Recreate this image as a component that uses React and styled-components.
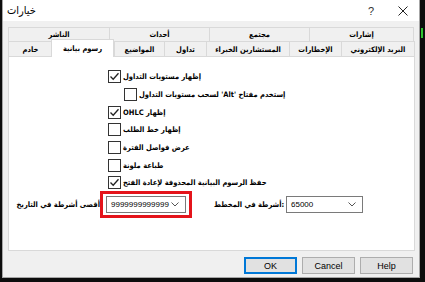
import styled, { createGlobalStyle } from "styled-components";

const GlobalStyle = createGlobalStyle`
  html, body {
    margin: 0;
    padding: 0;
    background: #0d0d0d;
  }
  body {
    font-family: "Liberation Sans", "DejaVu Sans", sans-serif;
    color: #000;
  }
`;

const arabic = `"DejaVu Sans Condensed", "DejaVu Sans", sans-serif`;

const Page = styled.div`
  display: flex;
  width: 425px;
  height: 282px;
  padding-left: 2px;
  box-sizing: border-box;
  overflow: hidden;
`;

const Window = styled.div`
  width: 418px;
  height: 278px;
  box-sizing: border-box;
  background: #f0f0f0;
  border: 1px solid #a6a6a6;
  border-top: none;
  display: flex;
  flex-direction: column;
`;

const Edge = styled.div`
  flex: 1;
  display: flex;
  flex-direction: column;
  padding-top: 28px;
`;

const Marker = styled.div`
  width: 2px;
  height: 10px;
  margin-left: 1px;
  background: #2fc32f;
`;

const TitleBar = styled.div`
  height: 21px;
  background: #fff;
  display: flex;
  align-items: center;
  padding-left: 4px;
`;

const Title = styled.div`
  flex: 1;
  font-family: ${arabic};
  font-size: 11px;
`;

const Ctrl = styled.div`
  width: 32px;
  height: 21px;
  display: flex;
  align-items: center;
  justify-content: center;
  font-size: 11px;
  color: #333;
`;

const Body = styled.div`
  padding: 6px 3px 0 5px;
  display: flex;
  flex-direction: column;
`;

const TabRow = styled.div`
  display: flex;
  height: ${(p) => p.$h}px;
`;

const Tab = styled.div`
  width: ${(p) => p.$w}px;
  box-sizing: border-box;
  border: 1px solid #d9d9d9;
  border-bottom: none;
  margin-right: -1px;
  background: #f0f0f0;
  display: flex;
  align-items: center;
  justify-content: center;
  font-family: ${arabic};
  font-size: 7.5px;
  font-weight: bold;
  white-space: nowrap;
  direction: rtl;
`;

const ActiveTab = styled(Tab)`
  position: relative;
  z-index: 1;
  background: #fff;
  height: 18px;
  margin: -2px 0 -1px -1px;
  width: ${(p) => p.$w + 2}px;
`;

const Panel = styled.div`
  height: 195px;
  width: 407px;
  box-sizing: border-box;
  background: #fff;
  border: 1px solid #d9d9d9;
  padding: 11px 0 0 4px;
  display: flex;
  flex-direction: column;
`;

const Checks = styled.div`
  padding-left: 95px;
  display: flex;
  flex-direction: column;
`;

const CheckRow = styled.div`
  height: 17.7px;
  display: flex;
  align-items: center;
  gap: 2px;
  padding-left: ${(p) => (p.$indent ? 16 : 0)}px;
`;

const Box = styled.span`
  width: 13px;
  height: 13px;
  box-sizing: border-box;
  border: 1px solid #333;
  background: #fff;
  display: flex;
  align-items: center;
  justify-content: center;
  flex-shrink: 0;
`;

const Label = styled.span`
  font-family: ${arabic};
  font-size: 7.5px;
  font-weight: bold;
  white-space: nowrap;
  direction: ltr;
  unicode-bidi: plaintext;
`;

const ComboRow = styled.div`
  display: flex;
  align-items: center;
  margin-top: -1px;
`;

const FieldLabel = styled(Label)`
  width: ${(p) => p.$w}px;
  text-align: right;
  unicode-bidi: normal;
  margin-right: ${(p) => p.$gap}px;
`;

const Highlight = styled.div`
  border: 3px solid #e4141b;
  padding: 2px 3px;
  margin-right: 22px;
  display: flex;
`;

const Combo = styled.div`
  width: ${(p) => p.$w}px;
  height: 17px;
  box-sizing: border-box;
  border: 1px solid #7a7a7a;
  background: #fff;
  display: flex;
  align-items: center;
  justify-content: space-between;
  padding: 0 6px 0 4px;
  font-size: 8px;
`;

const Footer = styled.div`
  display: flex;
  justify-content: flex-end;
  gap: 5px;
  padding: 6px 3px 0 0;
`;

const Button = styled.div`
  width: 53px;
  height: 17px;
  box-sizing: border-box;
  background: #e1e1e1;
  border: ${(p) => (p.$primary ? "2px solid #0078d7" : "1px solid #adadad")};
  display: flex;
  align-items: center;
  justify-content: center;
  font-size: 9px;
`;

const Chevron = () => (
  <svg width="8" height="5" viewBox="0 0 8 5">
    <polyline points="0.5,0.5 4,4 7.5,0.5" fill="none" stroke="#555" strokeWidth="1" />
  </svg>
);

const Check = () => (
  <svg width="11" height="11" viewBox="0 0 11 11">
    <polyline points="1.5,5.5 4.2,8.3 9.5,2.2" fill="none" stroke="#222" strokeWidth="1.3" />
  </svg>
);

const topTabs = [
  { w: 102, t: "الناشر" },
  { w: 101, t: "أحداث" },
  { w: 101, t: "مجتمع" },
  { w: 105, t: "إشارات" },
];

const bottomTabs = [
  { w: 45, t: "خادم" },
  { w: 61, t: "رسوم بيانية", active: true },
  { w: 51, t: "المواضيع" },
  { w: 43, t: "تداول" },
  { w: 84, t: "المستشارين الخبراء" },
  { w: 53, t: "الإخطارات" },
  { w: 74, t: "البريد الإلكتروني" },
];

const options = [
  { t: "إظهار مستويات التداول", on: true },
  { t: "إستخدم مفتاح 'Alt' لسحب مستويات التداول", indent: true },
  { t: "إظهار OHLC", on: true },
  { t: "إظهار خط الطلب" },
  { t: "عرض فواصل الفترة" },
  { t: "طباعة ملونة" },
  { t: "حفظ الرسوم البيانية المحذوفة لإعادة الفتح", on: true },
];

export default function App() {
  return (
    <Page>
      <GlobalStyle />
      <Window>
        <TitleBar>
          <Title>خيارات</Title>
          <Ctrl>?</Ctrl>
          <Ctrl>
            <svg width="10" height="10" viewBox="0 0 10 10">
              <path d="M0.5 0.5 L9.5 9.5 M9.5 0.5 L0.5 9.5" stroke="#222" strokeWidth="1" />
            </svg>
          </Ctrl>
        </TitleBar>
        <Body>
          <TabRow $h={14}>
            {topTabs.map((tab) => (
              <Tab key={tab.t} $w={tab.w}>{tab.t}</Tab>
            ))}
          </TabRow>
          <TabRow $h={15}>
            {bottomTabs.map((tab) =>
              tab.active ? (
                <ActiveTab key={tab.t} $w={tab.w}>{tab.t}</ActiveTab>
              ) : (
                <Tab key={tab.t} $w={tab.w}>{tab.t}</Tab>
              )
            )}
          </TabRow>
          <Panel>
            <Checks>
              {options.map((o) => (
                <CheckRow key={o.t} $indent={o.indent}>
                  <Box>{o.on && <Check />}</Box>
                  <Label>{o.t}</Label>
                </CheckRow>
              ))}
            </Checks>
            <ComboRow>
              <FieldLabel $w={87} $gap={0}>أقصى أشرطة في التاريخ</FieldLabel>
              <Highlight>
                <Combo $w={80}>
                  <span>9999999999999</span>
                  <Chevron />
                </Combo>
              </Highlight>
              <FieldLabel $w={70} $gap={2}>أشرطة في المخطط:</FieldLabel>
              <Combo $w={77}>
                <span>65000</span>
                <Chevron />
              </Combo>
            </ComboRow>
          </Panel>
          <Footer>
            <Button $primary>OK</Button>
            <Button>Cancel</Button>
            <Button>Help</Button>
          </Footer>
        </Body>
      </Window>
      <Edge>
        <Marker />
      </Edge>
    </Page>
  );
}
